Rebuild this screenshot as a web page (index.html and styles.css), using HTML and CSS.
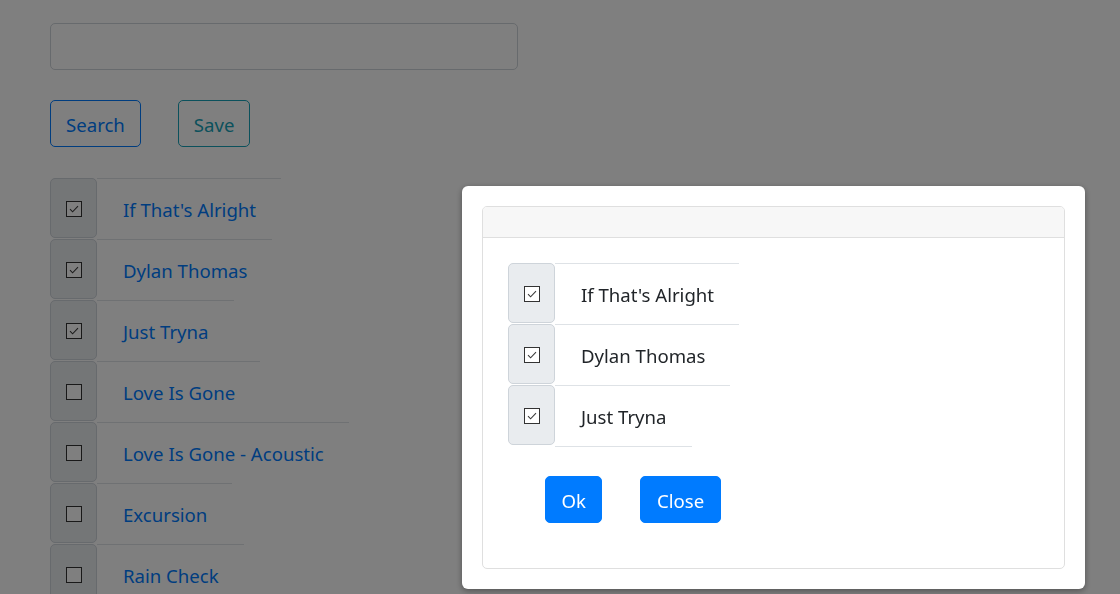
FILE: index.html
```html
<!DOCTYPE html>
<html lang="en">
<head>
<meta charset="utf-8">
<title>Tracks</title>
<link rel="stylesheet" href="styles.css">
</head>
<body>
<div class="page">
  <input class="search-input" type="text">
  <div class="actions">
    <button class="btn btn-outline-primary">Search</button>
    <button class="btn btn-outline-info">Save</button>
  </div>
  <ul class="track-list">
    <li class="track"><span class="check-cell"><svg class="cb" viewBox="0 0 16 16"><rect x="0.5" y="0.5" width="15" height="15"/><path d="M4 8.2 L6.6 10.8 L12 5.2"/></svg></span><a class="track-name">If That's Alright</a></li>
    <li class="track"><span class="check-cell"><svg class="cb" viewBox="0 0 16 16"><rect x="0.5" y="0.5" width="15" height="15"/><path d="M4 8.2 L6.6 10.8 L12 5.2"/></svg></span><a class="track-name">Dylan Thomas</a></li>
    <li class="track"><span class="check-cell"><svg class="cb" viewBox="0 0 16 16"><rect x="0.5" y="0.5" width="15" height="15"/><path d="M4 8.2 L6.6 10.8 L12 5.2"/></svg></span><a class="track-name">Just Tryna</a></li>
    <li class="track"><span class="check-cell"><svg class="cb" viewBox="0 0 16 16"><rect x="0.5" y="0.5" width="15" height="15"/></svg></span><a class="track-name">Love Is Gone</a></li>
    <li class="track"><span class="check-cell"><svg class="cb" viewBox="0 0 16 16"><rect x="0.5" y="0.5" width="15" height="15"/></svg></span><a class="track-name">Love Is Gone - Acoustic</a></li>
    <li class="track"><span class="check-cell"><svg class="cb" viewBox="0 0 16 16"><rect x="0.5" y="0.5" width="15" height="15"/></svg></span><a class="track-name">Excursion</a></li>
    <li class="track"><span class="check-cell"><svg class="cb" viewBox="0 0 16 16"><rect x="0.5" y="0.5" width="15" height="15"/></svg></span><a class="track-name">Rain Check</a></li>
  </ul>
</div>

<div class="backdrop"></div>

<div class="modal">
  <div class="card">
    <div class="card-header"></div>
    <div class="card-body">
      <ul class="selected-list">
        <li class="sel-track"><span class="check-cell"><svg class="cb" viewBox="0 0 16 16"><rect x="0.5" y="0.5" width="15" height="15"/><path d="M4 8.2 L6.6 10.8 L12 5.2"/></svg></span><span class="sel-name">If That's Alright</span></li>
        <li class="sel-track"><span class="check-cell"><svg class="cb" viewBox="0 0 16 16"><rect x="0.5" y="0.5" width="15" height="15"/><path d="M4 8.2 L6.6 10.8 L12 5.2"/></svg></span><span class="sel-name">Dylan Thomas</span></li>
        <li class="sel-track"><span class="check-cell"><svg class="cb" viewBox="0 0 16 16"><rect x="0.5" y="0.5" width="15" height="15"/><path d="M4 8.2 L6.6 10.8 L12 5.2"/></svg></span><span class="sel-name">Just Tryna</span></li>
      </ul>
      <div class="modal-actions">
        <button class="btn btn-primary">Ok</button>
        <button class="btn btn-primary">Close</button>
      </div>
    </div>
  </div>
</div>
</body>
</html>
```

FILE: styles.css
```css
* { box-sizing: border-box; }

html, body {
  margin: 0;
  padding: 0;
  background: #ffffff;
  height: 100%;
  overflow: hidden;
}

body {
  font-family: "Noto Sans", "Open Sans", "DejaVu Sans", sans-serif;
  color: #212529;
  font-size: 20px;
}

.page {
  padding: 23px 50px 0 50px;
}

.search-input {
  display: block;
  width: 468px;
  height: 47px;
  border: 1px solid #ced4da;
  border-radius: 5px;
  background: #fff;
  margin: 0;
}

.actions {
  display: flex;
  gap: 37px;
  margin-top: 30px;
}

.btn {
  font-family: inherit;
  font-size: 18.6px;
  line-height: 29px;
  height: 47px;
  padding: 9px 15px 7px 15px;
  border-radius: 5px;
  border: 1px solid transparent;
  background: transparent;
  cursor: pointer;
}

.btn-outline-primary {
  color: #007bff;
  border-color: #007bff;
}

.btn-outline-info {
  color: #17a2b8;
  border-color: #17a2b8;
}

.btn-primary {
  background: #007bff;
  border-color: #007bff;
  color: #fff;
  padding-left: 15.5px;
  padding-right: 15.5px;
}

.track-list,
.selected-list {
  list-style: none;
  margin: 0;
  padding: 0;
}

.track-list {
  margin-top: 31px;
}

.track,
.sel-track {
  display: flex;
  height: 61px;
}

.check-cell {
  width: 47px;
  height: 60px;
  flex: none;
  display: flex;
  align-items: center;
  justify-content: center;
  background: #e9ecef;
  border: 1px solid #ced4da;
  border-radius: 5px;
}

.cb {
  width: 16px;
  height: 16px;
  margin-top: 1px;
}

.cb rect {
  fill: #ffffff;
  stroke: #333333;
  stroke-width: 1;
}

.cb path {
  fill: none;
  stroke: #3a3a3a;
  stroke-width: 1.1;
}

.track-name {
  display: block;
  color: #007bff;
  font-size: 18.6px;
  line-height: 57px;
  padding: 2px 25px 0 26px;
  border-top: 1px solid #dee2e6;
}

.backdrop {
  position: fixed;
  inset: 0;
  background: rgba(0, 0, 0, 0.5);
}

.modal {
  position: fixed;
  left: 462px;
  top: 186px;
  width: 623px;
  height: 403px;
  background: #fff;
  border-radius: 6px;
  padding: 20px;
  box-shadow: 0 2px 6px rgba(0, 0, 0, 0.35);
}

.card {
  height: 363px;
  border: 1px solid #dfdfdf;
  border-radius: 5px;
  overflow: hidden;
}

.card-header {
  height: 31px;
  background: #f7f7f7;
  border-bottom: 1px solid #dfdfdf;
}

.card-body {
  padding: 25px 25px 0 25px;
}

.sel-name {
  display: block;
  color: #212529;
  font-size: 18.6px;
  line-height: 57px;
  padding: 2px 25px 0 26px;
  border-top: 1px solid #dee2e6;
  border-bottom: 1px solid #dee2e6;
  margin-bottom: -1px;
}

.modal-actions {
  display: flex;
  gap: 38px;
  margin-top: 30px;
  padding-left: 37px;
}
```
